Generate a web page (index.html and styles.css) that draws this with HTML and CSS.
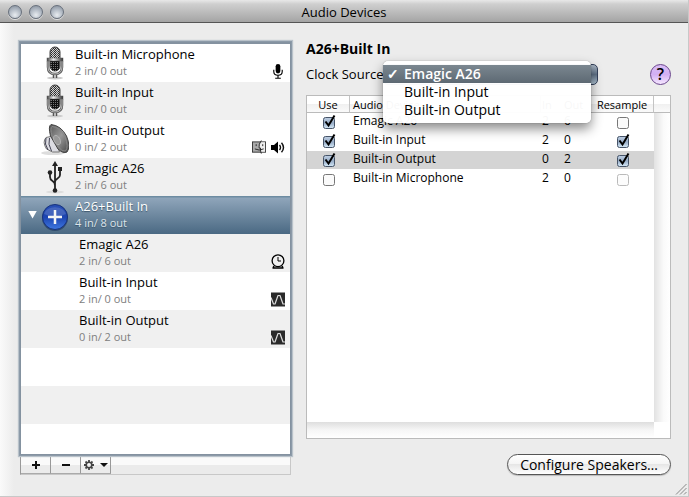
FILE: index.html
```html
<!DOCTYPE html>
<html lang="en">
<head>
    <meta charset="UTF-8">
    <meta name="viewport" content="width=device-width, initial-scale=1.0">
    <title>Audio Devices</title>
    <link rel="stylesheet" href="styles.css">
</head>
<body>
    <svg class="defs" aria-hidden="true">
        <defs>
            <linearGradient id="steel" x1="0" x2="1" y1="0" y2="0">
                <stop offset="0" stop-color="#444"/>
                <stop offset="0.4" stop-color="#eee"/>
                <stop offset="1" stop-color="#333"/>
            </linearGradient>
            <linearGradient id="cone" x1="0" x2="1" y1="0" y2="1">
                <stop offset="0" stop-color="#555"/>
                <stop offset="0.5" stop-color="#999"/>
                <stop offset="1" stop-color="#444"/>
            </linearGradient>
            <linearGradient id="blue" x1="0" x2="0" y1="0" y2="1">
                <stop offset="0" stop-color="#2a50b4"/>
                <stop offset="0.5" stop-color="#1c44b0"/>
                <stop offset="1" stop-color="#3f78e0"/>
            </linearGradient>
            <pattern id="mesh" width="2" height="2" patternUnits="userSpaceOnUse">
                <rect width="2" height="2" fill="#ccc"/>
                <rect width="1" height="1" fill="#222"/>
                <rect x="1" y="1" width="1" height="1" fill="#222"/>
            </pattern>
            <pattern id="mesh-dark" width="2" height="2" patternUnits="userSpaceOnUse">
                <rect width="2" height="2" fill="#111"/>
                <rect width="1" height="1" fill="#777"/>
            </pattern>
            <symbol id="microphone" viewBox="0 0 28 34">
                <ellipse cx="14" cy="32" rx="8" ry="1.5" fill="#ccc"/>
                <path d="M12.500 27v5M15.500 27v5" stroke="#555" stroke-width="1.500"/>
                <path d="M7 15v6q0 7 7 7t7-7v-6" fill="none" stroke="#555" stroke-width="2.500"/>
                <path d="M7 15v6q0 7 7 7t7-7v-6" fill="none" stroke="#bbb"/>
                <rect x="9" y="1" width="10" height="24" rx="5" fill="url(#mesh)" stroke="#444"/>
                <path d="M9.500 15h9v5q0 5-4.500 5t-4.500-5z" fill="url(#mesh-dark)"/>
                <rect x="6" y="12" width="16" height="3" fill="url(#steel)" stroke="#555" stroke-width=".5"/>
                <path d="M12 3v9M16 3v9" stroke="#fff" stroke-opacity=".4"/>
            </symbol>
            <symbol id="speaker" viewBox="0 0 28 34">
                <ellipse cx="12" cy="31" rx="12" ry="2" fill="#ddd"/>
                <path d="M12 14L5 15.500Q1 20 5.500 27l6 3 7 0z" fill="#dcdce2" stroke="#777"/>
                <path d="M5 16q-2 6 2 12M8.500 16q-2 6 2 13" fill="none" stroke="#445"/>
                <path d="M10 2.500Q20 3.500 25.500 14Q30 25 26 30Q22 32 17 27L9.500 14Q7 4 10 2.500z" fill="url(#cone)" stroke="#444"/>
                <path d="M11 4.500Q19 5 24 15Q28 25 24.500 29Q21 30 17.500 25L11 14Q9 6 11 4.500z" fill="none" stroke="#888"/>
                <ellipse cx="16" cy="18" rx="3" ry="5" transform="rotate(-27 16 18)" fill="#999" stroke="#ccc" stroke-width=".5"/>
            </symbol>
            <symbol id="usb" viewBox="0 0 28 34">
                <ellipse cx="14" cy="32" rx="9" ry="1.500" fill="#ddd"/>
                <path d="M14 5v25M14 25.500q0-3-2.500-4.500T9 17v-5M14 22q0-2 2.500-3.500T19 15V9" fill="none" stroke="#222" stroke-width="1.800"/>
                <path d="M14 1l3 5h-6z" fill="#222"/>
                <circle cx="9" cy="12.500" r="2.300" fill="#222"/>
                <rect x="17" y="7" width="4" height="4" fill="#222"/>
                <circle cx="14" cy="30.500" r="2.300" fill="#222"/>
            </symbol>
            <symbol id="aggregate" viewBox="0 0 28 34">
                <circle cx="14" cy="20" r="13" fill="#1b355c" fill-opacity=".6"/>
                <circle cx="14" cy="19" r="12.500" fill="url(#blue)" stroke="#17327c"/>
                <path d="M3 16a11.500 9.500 0 0 1 22 0q-11 5-22 0z" fill="#fff" fill-opacity=".15"/>
                <path d="M14 12v14M7 19h14" stroke="#f4f4f4" stroke-width="2.500"/>
            </symbol>
            <symbol id="mic-small" viewBox="0 0 14 16">
                <rect x="4.500" y="0" width="5" height="10" rx="2.500"/>
                <path d="M2.500 6v2q0 4 4.500 4t4.500-4V6M7 12v3M4 15.200h6" fill="none" stroke="#000" stroke-width="1.200"/>
            </symbol>
            <symbol id="finder" viewBox="0 0 15 15">
                <rect x="0.500" y="1.500" width="14" height="11" fill="#aaa" stroke="#333"/>
                <path d="M9 2h5v10H9.500L9 8H7z" fill="#eee"/>
                <path d="M10 0Q7 4 7.500 8H9q0 4 1 6M4.500 4v2M11.500 4v2M3 9q4.500 2.500 9.500 0" fill="none" stroke="#222"/>
            </symbol>
            <symbol id="sound" viewBox="0 0 14 14">
                <path d="M0 4.500h3L7 1v12L3 9.500H0z"/>
                <path d="M8.500 4.500q2 2.500 0 5M10.500 2.200q4 4.800 0 9.600" fill="none" stroke="#111" stroke-width="1.400"/>
            </symbol>
            <symbol id="clock" viewBox="0 0 14 15">
                <circle cx="7" cy="6.700" r="5.900" fill="none" stroke="#000" stroke-width="1.300"/>
                <path d="M7 3v4h3" fill="none" stroke="#000"/>
                <path d="M1.500 14h11M3 12l-1 2M11 12l1 2" stroke="#000" stroke-width="1.600"/>
            </symbol>
            <symbol id="wave" viewBox="0 0 14 14">
                <rect width="14" height="14" fill="#2a2a2a"/>
                <path d="M0 5l2.500 6.500H4L7 3h2l3 8.500h2" fill="none" stroke="#ddd" stroke-width="1.200" stroke-linejoin="round"/>
            </symbol>
        </defs>
    </svg>

    <div class="window">
        <header class="titlebar">
            <div class="lights">
                <button class="light" aria-label="Close"></button>
                <button class="light" aria-label="Minimize"></button>
                <button class="light" aria-label="Zoom"></button>
            </div>
            <h1>Audio Devices</h1>
        </header>

        <main class="content">
            <section class="sidebar">
                <ul class="devices">
                    <li class="device">
                        <svg class="device-icon"><use href="#microphone"/></svg>
                        <div class="device-text">
                            <div class="name">Built-in Microphone</div>
                            <div class="io">2 in/ 0 out</div>
                        </div>
                        <div class="status"><svg class="badge"><use href="#mic-small"/></svg></div>
                    </li>
                    <li class="device">
                        <svg class="device-icon"><use href="#microphone"/></svg>
                        <div class="device-text">
                            <div class="name">Built-in Input</div>
                            <div class="io">2 in/ 0 out</div>
                        </div>
                    </li>
                    <li class="device">
                        <svg class="device-icon"><use href="#speaker"/></svg>
                        <div class="device-text">
                            <div class="name">Built-in Output</div>
                            <div class="io">0 in/ 2 out</div>
                        </div>
                        <div class="status">
                            <svg class="badge"><use href="#finder"/></svg>
                            <svg class="badge"><use href="#sound"/></svg>
                        </div>
                    </li>
                    <li class="device">
                        <svg class="device-icon"><use href="#usb"/></svg>
                        <div class="device-text">
                            <div class="name">Emagic A26</div>
                            <div class="io">2 in/ 6 out</div>
                        </div>
                    </li>
                    <li class="device selected">
                        <button class="disclosure" aria-label="Collapse"></button>
                        <svg class="device-icon"><use href="#aggregate"/></svg>
                        <div class="device-text">
                            <div class="name">A26+Built In</div>
                            <div class="io">4 in/ 8 out</div>
                        </div>
                    </li>
                    <li class="device child">
                        <div class="device-text">
                            <div class="name">Emagic A26</div>
                            <div class="io">2 in/ 6 out</div>
                        </div>
                        <div class="status"><svg class="badge"><use href="#clock"/></svg></div>
                    </li>
                    <li class="device child">
                        <div class="device-text">
                            <div class="name">Built-in Input</div>
                            <div class="io">2 in/ 0 out</div>
                        </div>
                        <div class="status"><svg class="badge"><use href="#wave"/></svg></div>
                    </li>
                    <li class="device child">
                        <div class="device-text">
                            <div class="name">Built-in Output</div>
                            <div class="io">0 in/ 2 out</div>
                        </div>
                        <div class="status"><svg class="badge"><use href="#wave"/></svg></div>
                    </li>
                </ul>
                <div class="toolbar">
                    <button class="tool" aria-label="Add">
                        <svg width="10" height="10" viewBox="0 0 10 10"><path d="M5 1v8M1 5h8" stroke="#111" stroke-width="2"/></svg>
                    </button>
                    <button class="tool" aria-label="Remove">
                        <svg width="10" height="10" viewBox="0 0 10 10"><path d="M1 5h8" stroke="#111" stroke-width="2"/></svg>
                    </button>
                    <button class="tool" aria-label="Actions">
                        <svg width="24" height="10" viewBox="0 0 24 10">
                            <circle cx="5" cy="5" r="2.800" fill="none" stroke="#444" stroke-width="1.600"/>
                            <path d="M5 0v2M5 8v2M0 5h2M8 5h2M1.500 1.500l1.300 1.300M7.200 7.200l1.300 1.300M8.500 1.500L7.200 2.800M2.800 7.200L1.500 8.500" stroke="#444" stroke-width="1.800"/>
                            <path d="M16 3h8l-4 4z" fill="#111"/>
                        </svg>
                    </button>
                </div>
            </section>

            <section class="detail">
                <h2>A26+Built In</h2>
                <div class="clock-row">
                    <label for="clockSource">Clock Source:</label>
                    <div class="popup">
                        <select id="clockSource">
                            <option>Emagic A26</option>
                            <option>Built-in Input</option>
                            <option>Built-in Output</option>
                        </select>
                        <div class="menu" role="menu">
                            <button class="menu-item active" role="menuitem"><span class="tick">✓</span>Emagic A26</button>
                            <button class="menu-item" role="menuitem"><span class="tick"></span>Built-in Input</button>
                            <button class="menu-item" role="menuitem"><span class="tick"></span>Built-in Output</button>
                        </div>
                    </div>
                    <button class="help" aria-label="Help">?</button>
                </div>

                <div class="table-box">
                    <table>
                        <thead>
                            <tr>
                                <th class="use">Use</th>
                                <th class="audio">Audio Device</th>
                                <th class="in">In</th>
                                <th class="out">Out</th>
                                <th class="resample">Resample</th>
                                <th class="corner"></th>
                            </tr>
                        </thead>
                        <tbody>
                            <tr>
                                <td class="use"><input type="checkbox" aria-label="Use Emagic A26" checked></td>
                                <td>Emagic A26</td>
                                <td class="in">2</td>
                                <td class="out">6</td>
                                <td class="resample"><input type="checkbox" aria-label="Resample Emagic A26"></td>
                            </tr>
                            <tr>
                                <td class="use"><input type="checkbox" aria-label="Use Built-in Input" checked></td>
                                <td>Built-in Input</td>
                                <td class="in">2</td>
                                <td class="out">0</td>
                                <td class="resample"><input type="checkbox" aria-label="Resample Built-in Input" checked></td>
                            </tr>
                            <tr class="picked">
                                <td class="use"><input type="checkbox" aria-label="Use Built-in Output" checked></td>
                                <td>Built-in Output</td>
                                <td class="in">0</td>
                                <td class="out">2</td>
                                <td class="resample"><input type="checkbox" aria-label="Resample Built-in Output" checked></td>
                            </tr>
                            <tr>
                                <td class="use"><input type="checkbox" aria-label="Use Built-in Microphone"></td>
                                <td>Built-in Microphone</td>
                                <td class="in">2</td>
                                <td class="out">0</td>
                                <td class="resample"><input type="checkbox" aria-label="Resample Built-in Microphone" disabled></td>
                            </tr>
                        </tbody>
                    </table>
                    <div class="scroll-area">
                        <div class="scroll-y"></div>
                    </div>
                    <div class="scroll-x"></div>
                </div>

                <button class="configure">Configure Speakers…</button>
            </section>
        </main>

        <svg class="grip" viewBox="0 0 12 12"><path d="M1 11.500L11.500 1M5 11.500L11.500 5M9 11.500L11.500 9" stroke="#888"/></svg>
    </div>
</body>
</html>
```
FILE: styles.css
```css
* {
    box-sizing: border-box;
}
body {
    margin: 0;
    font-family: "Open Sans", "Noto Sans", sans-serif;
    font-size: 13px;
    color: #000;
}
button {
    font: inherit;
    color: inherit;
    padding: 0;
    border: none;
    background: none;
}
.defs {
    position: absolute;
    width: 0;
    height: 0;
}
.window {
    position: relative;
    display: flex;
    flex-direction: column;
    min-height: 100vh;
    background: linear-gradient(to right, #fafafa, #ececec 14px);
    border-right: 1px solid #c8c8c8;
    border-bottom: 1px solid #c8c8c8;
}

/* title bar */
.titlebar {
    display: grid;
    grid-template-columns: 1fr auto 1fr;
    align-items: center;
    height: 23px;
    padding: 2px 8px 0;
    background: linear-gradient(#e8e8e8, #cfcfcf 4px, #a4a4a4);
    border-bottom: 1px solid #555;
}
.titlebar h1 {
    margin: 0;
    font-size: 13px;
    font-weight: 400;
    line-height: 20px;
}
.lights {
    display: flex;
    gap: 7px;
}
.light {
    width: 14px;
    height: 14px;
    border: 1px solid #68707c;
    border-radius: 50%;
    background: radial-gradient(circle at 50% 75%, #e8ecf0, #b4bcc6 50%, #818b98);
    box-shadow: 0 1px 0 #ddd;
}

.content {
    flex: 1;
    display: grid;
    grid-template-columns: 271px 1fr;
    gap: 15px;
    padding: 19px 17px 21px 20px;
}

/* device list */
.sidebar {
    display: flex;
    flex-direction: column;
}
.devices {
    flex: 1;
    margin: 0;
    padding: 0;
    list-style: none;
    border: 1px solid #8492a0;
    border-top-width: 2px;
    box-shadow: 0 0 0 1px #8c9aa8, 0 0 1px 2px #b9c2ca;
    background: repeating-linear-gradient(#fff 0 38px, #f0f0f0 38px 76px);
    z-index: 1;
}
.device {
    display: flex;
    height: 38px;
    padding: 1px 5px 2px 20px;
}
.device.child {
    padding-left: 58px;
}
.device.selected {
    padding-left: 7px;
    color: #fff;
    background: linear-gradient(#6d8ca2 1px, #8fa5ba 2px, #4a6983);
    text-shadow: 0 1px 1px #3c566c;
}
.device-icon {
    width: 28px;
    height: 34px;
    margin: 1px 6px 0 0;
}
.device-text {
    flex: 1;
}
.name {
    line-height: 18px;
}
.io {
    font-size: 11px;
    line-height: 15px;
    color: #808080;
}
.selected .io {
    color: #dde4ea;
}
.disclosure {
    align-self: center;
    width: 9px;
    height: 8px;
    margin-right: 4px;
    background: #fff;
    clip-path: polygon(0 0, 100% 0, 50% 100%);
}
.status {
    display: flex;
    align-items: flex-end;
    gap: 5px;
    padding-bottom: 1px;
}
.badge {
    width: 14px;
    height: 15px;
}
.toolbar {
    display: flex;
    height: 20px;
    background: linear-gradient(#fafafa 50%, #ebebeb 50%);
    border: 1px solid #c8c8c8;
    border-left-color: #999;
}
.tool {
    display: flex;
    align-items: center;
    justify-content: center;
    width: 30px;
    border-right: 1px solid #999;
    border-bottom: 1px solid #aaa;
}

/* detail pane */
.detail {
    display: flex;
    flex-direction: column;
    min-width: 0;
}
.detail h2 {
    margin: 0 0 7px;
    font-size: 14px;
    font-weight: 700;
    line-height: 13px;
}
.clock-row {
    display: flex;
    align-items: center;
    height: 24px;
    font-size: 14px;
}
.clock-row label {
    width: 77px;
    font-size: 13px;
    line-height: 16px;
    white-space: nowrap;
}
.popup {
    position: relative;
    width: 215px;
}
.popup select {
    display: block;
    width: 100%;
    height: 21px;
    appearance: none;
    border: 1px solid #33405a;
    border-radius: 5px;
    background: linear-gradient(#a9b6c4, #5f7186 50%, #b0c4d4);
    color: transparent;
}
.menu {
    position: absolute;
    top: -3px;
    left: 0;
    right: 7px;
    padding: 4px 0;
    background: rgba(255, 255, 255, 0.97);
    border-radius: 5px;
    box-shadow: 0 6px 12px rgba(0, 0, 0, 0.45), 0 0 1px rgba(0, 0, 0, 0.5);
    z-index: 2;
}
.menu-item {
    display: flex;
    width: 100%;
    height: 18px;
    line-height: 18px;
}
.menu-item.active {
    color: #fff;
    font-weight: 600;
    background: linear-gradient(#7b8790, #5d6973);
}
.tick {
    width: 21px;
    padding-left: 4px;
    text-align: left;
}
.help {
    width: 21px;
    height: 21px;
    margin-left: auto;
    border: 1px solid #69448c;
    border-radius: 50%;
    background: linear-gradient(#d9bdf5, #d2aff3 50%, #f6e8ff);
    font-size: 16px;
    font-weight: 600;
    line-height: 19px;
}

/* device table */
.table-box {
    flex: 1;
    display: flex;
    flex-direction: column;
    margin: 9px 0 15px;
    border: 1px solid #bbb;
    background: #fff;
}
table {
    width: 100%;
    table-layout: fixed;
    border-collapse: separate;
    border-spacing: 0;
    font-size: 12px;
}
th {
    height: 17px;
    padding: 0 3px;
    border-bottom: 1px solid #bbb;
    border-right: 1px solid #c4c4c4;
    background: linear-gradient(#fff 50%, #f0f0f0 50%, #fafafa);
    font-size: 11px;
    font-weight: 400;
    line-height: 15px;
    text-align: left;
}
td {
    height: 19px;
    padding: 0 3px 3px;
    line-height: 15px;
    border-bottom: 1px solid #fff;
}
.picked td {
    background: #d4d4d4;
}
th.use {
    width: 43px;
}
th.in {
    width: 22px;
}
th.out {
    width: 28px;
}
th.in, th.out {
    border-right-color: transparent;
}
th.resample {
    width: 63px;
}
th.corner {
    width: 16px;
    border-right: none;
}
.use, .resample {
    padding: 0;
    text-align: center;
}
.in, .out {
    padding-left: 1px;
    padding-right: 0;
}
input[type="checkbox"] {
    display: block;
    width: 15px;
    height: 16px;
    margin: 0 auto;
    appearance: none;
    background: url("data:image/svg+xml,%3Csvg xmlns='http://www.w3.org/2000/svg' viewBox='0 0 15 16'%3E%3Crect x='2.500' y='3.500' width='11' height='11' rx='2' fill='%23fafafa' stroke='%23777'/%3E%3C/svg%3E") center no-repeat;
}
input[type="checkbox"]:checked {
    background-image: url("data:image/svg+xml,%3Csvg xmlns='http://www.w3.org/2000/svg' viewBox='0 0 15 16'%3E%3ClinearGradient id='a' x2='0' y2='1'%3E%3Cstop stop-color='%23c0d0e4'/%3E%3Cstop offset='.5' stop-color='%2397acc6'/%3E%3Cstop offset='1' stop-color='%23d8ecfa'/%3E%3C/linearGradient%3E%3Crect x='2.500' y='3.500' width='11' height='11' rx='2' fill='url(%23a)' stroke='%23465468'/%3E%3Cpath d='M4.500 7.500l3 4L13.500 1.500' fill='none' stroke='%23000' stroke-width='2'/%3E%3C/svg%3E");
}
input[type="checkbox"]:disabled {
    opacity: 0.5;
}
.scroll-area {
    flex: 1;
    display: flex;
    justify-content: flex-end;
    margin-top: -76px;
}
.scroll-y {
    width: 16px;
    background: linear-gradient(to right, #e2e2e2, #fafafa 60%, #fff);
}
.scroll-x {
    height: 16px;
    margin-right: 16px;
    background: linear-gradient(#dedede, #f6f6f6 50%, #fff);
}
.configure {
    align-self: flex-end;
    height: 21px;
    padding: 0 12px;
    border: 1px solid #555;
    border-radius: 11px;
    background: linear-gradient(#fff, #f4f4f4 50%, #e6e6e6 50%, #fff);
    box-shadow: 0 1px 1px #bbb;
    font-size: 14px;
    line-height: 17px;
}
.grip {
    position: absolute;
    right: 1px;
    bottom: 1px;
    width: 12px;
    height: 12px;
}
```
